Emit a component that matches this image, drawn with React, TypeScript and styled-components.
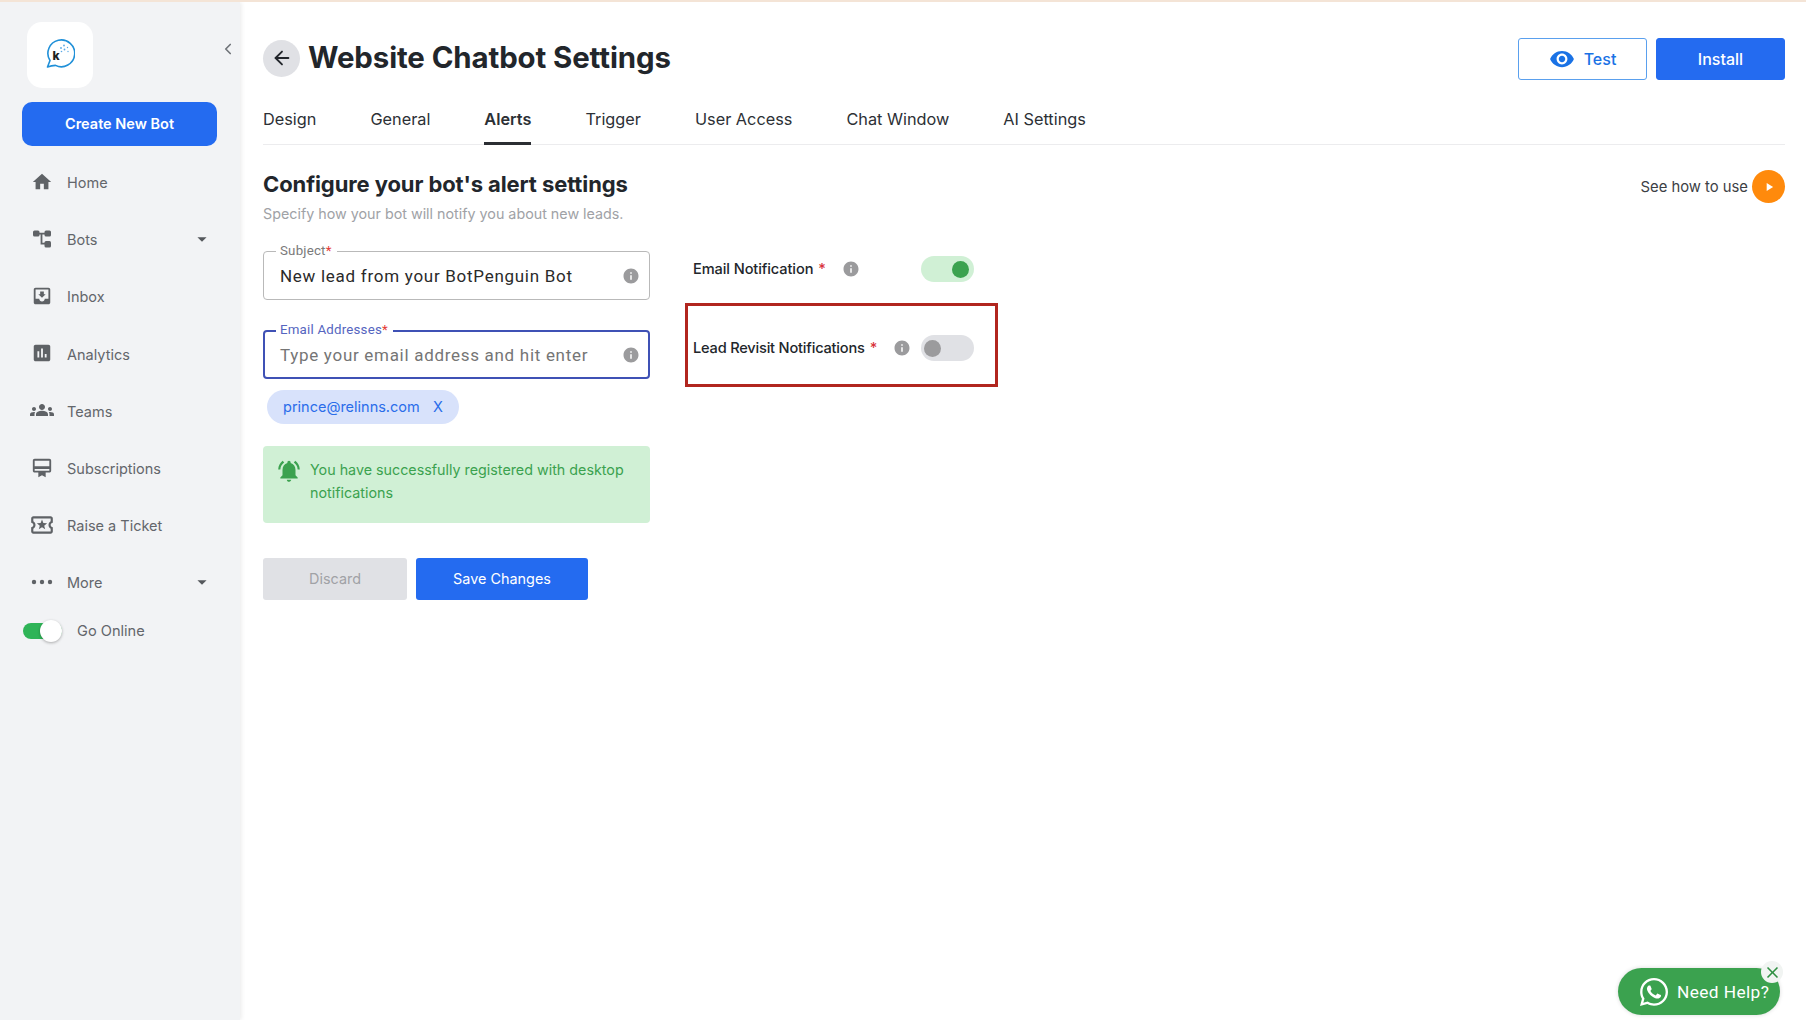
import React from "react";
import styled, { createGlobalStyle } from "styled-components";
import {
  MdHome, MdMoveToInbox, MdAssessment, MdGroups, MdCardMembership, MdOutlineLocalActivity,
  MdArrowDropDown, MdInfo, MdVisibility, MdNotificationsActive, MdPlayArrow, MdClose,
} from "react-icons/md";
import { FaWhatsapp } from "react-icons/fa";
import { ChevronLeft, ArrowLeft } from "lucide-react";

const Global = createGlobalStyle`
  html, body { margin: 0; padding: 0; background: #fff; }
  body { font-family: Inter, "Liberation Sans", sans-serif; color: #22262b; }
  * { box-sizing: border-box; }
`;

const Page = styled.div`
  width: 1806px; height: 1020px; display: flex; overflow: hidden; position: relative;
  border-top: 2px solid #f4e4d6;
`;
const Sidebar = styled.aside`
  width: 240px; flex: none; background: #f2f3f5; position: relative;
  padding: 20px 23px 0 22px; display: flex; flex-direction: column;
  box-shadow: 1px 0 5px rgba(0,0,0,.09);
`;
const LogoBox = styled.div`
  width: 66px; height: 66px; margin-left: 5px; background: #fff; border-radius: 15px;
  display: flex; align-items: center; justify-content: center; padding-right: 3px;
`;
const Collapse = styled.button`
  position: absolute; top: 38px; right: 3px; border: 0; background: none; padding: 0;
  color: #6f7378; display: flex;
`;
const CreateButton = styled.button`
  height: 44px; margin-top: 14px; border: 0; border-radius: 10px; background: #246bf0;
  color: #fff; font: 600 14.5px/40px Inter, sans-serif; padding-bottom: 2px;
`;
const NavList = styled.nav`
  display: flex; flex-direction: column; margin-top: 8px;
`;
const NavRow = styled.div`
  height: 57.2px; display: flex; align-items: center; gap: 15px; padding-left: 10px;
  color: #63666b; font-size: 14.5px; font-weight: 400;
`;
const NavIcon = styled.span`
  width: 20px; height: 20px; display: flex; align-items: center; justify-content: center; color: #5f6266;
  margin-bottom: 2px; flex: none;
  & > svg { flex: none; }
`;
const NavLabel = styled.span` flex: 1; `;
const Caret = styled.span`
  display: flex; margin-right: 4px; margin-bottom: 2px; color: #55585c;
`;
const GoOnline = styled.div`
  display: flex; align-items: center; gap: 15px; height: 24px; margin-top: 7px; color: #63666b; font-size: 14.6px;
`;
const SmallSwitch = styled.div`
  width: 39px; height: 16px; border-radius: 8px; background: #2fb457; position: relative; margin-left: 1px;
  &::after {
    content: ""; position: absolute; right: 0; top: -3px; width: 22px; height: 22px; border-radius: 50%;
    background: #fff; box-shadow: 0 1px 3px rgba(0,0,0,.3);
  }
`;
const Main = styled.main`
  flex: 1; padding: 34px 21px 0 23px; display: flex; flex-direction: column; min-width: 0;
`;
const Header = styled.header`
  display: flex; align-items: center; height: 44px;
`;
const BackButton = styled.button`
  width: 37px; height: 37px; flex: none; border: 0; border-radius: 50%; background: #e0e1e5; color: #22262b;
  display: flex; align-items: center; justify-content: center; padding: 0;
`;
const Title = styled.h1`
  margin: 0 0 0 8px; font-size: 29.4px; line-height: 44px; font-weight: 700; color: #22262b; flex: 1; letter-spacing: -.1px;
`;
const TopButton = styled.button<{ $solid?: boolean }>`
  width: 129px; height: 42px; margin: 1px 0 0 9px; border-radius: 3px; display: flex; align-items: center; justify-content: center;
  gap: 9px; font: 500 16px Inter, sans-serif; padding: 0;
  border: 1px solid ${(p) => (p.$solid ? "#246bf0" : "#5aa0ee")};
  background: ${(p) => (p.$solid ? "#246bf0" : "#fff")};
  color: ${(p) => (p.$solid ? "#fff" : "#1a72e5")};
`;
const Tabs = styled.div`
  display: flex; gap: 54px; height: 43px; margin-top: 22px; border-bottom: 1px solid #ececee;
`;
const Tab = styled.div<{ $active?: boolean }>`
  height: 43px; padding-top: 3px; line-height: 28px; font-size: 16.3px; color: #2c3035;
  font-weight: ${(p) => (p.$active ? 600 : 400)};
  border-bottom: 3px solid ${(p) => (p.$active ? "#2b2e33" : "transparent")};
`;
const SectionHead = styled.div`
  display: flex; justify-content: space-between; margin-top: 24px;
`;
const Heading = styled.h2`
  margin: 0; font-size: 22px; line-height: 30px; font-weight: 700; color: #22262b; letter-spacing: -.1px;
`;
const Sub = styled.p`
  margin: 5px 0 0; font-size: 14.3px; line-height: 20px; color: #a0a2a6;
`;
const HowTo = styled.div`
  display: flex; align-items: center; gap: 4px; font-size: 14.8px; color: #3c4045; height: 33px; margin-top: 1px;
`;
const PlayDot = styled.span`
  width: 33px; height: 33px; border-radius: 50%; background: #ff8a0c; color: #fff;
  display: flex; align-items: center; justify-content: center;
`;
const Columns = styled.div`
  display: flex; margin-top: 27px;
`;
const FormColumn = styled.div`
  width: 387px; flex: none; display: flex; flex-direction: column;
`;
const Field = styled.div<{ $focus?: boolean }>`
  position: relative; display: flex; align-items: center; justify-content: space-between; border-radius: 4px;
  padding: 0 ${(p) => (p.$focus ? "8px 0 15px" : "9px 0 16px")};
  height: 49px;
  border: ${(p) => (p.$focus ? "2px solid #3f51b5" : "1px solid #b9b9b9")};
  margin-top: ${(p) => (p.$focus ? 30 : 0)}px;
`;
const Legend = styled.label<{ $focus?: boolean }>`
  position: absolute; padding: 0 5px 0 4px; background: #fff;
  left: ${(p) => (p.$focus ? 11 : 12)}px; top: ${(p) => (p.$focus ? -9 : -8)}px;
  font: 400 13.3px/14px Roboto, sans-serif; letter-spacing: .2px;
  color: ${(p) => (p.$focus ? "#5565c0" : "#7a7a7a")};
  & > b { color: #e53935; font-weight: 400; }
`;
const FieldText = styled.span<{ $placeholder?: boolean }>`
  font: 400 17px Roboto, sans-serif; letter-spacing: ${(p) => (p.$placeholder ? ".7px" : ".72px")};
  color: ${(p) => (p.$placeholder ? "#757575" : "#2a2a2a")};
`;
const InfoWrap = styled.span`
  display: flex; color: #9b9b9d;
`;
const Chip = styled.div`
  align-self: flex-start; margin: 11px 0 0 4px; height: 34px; width: 192px; padding: 0 16px 2px; border-radius: 17px;
  background: #d8e2fb; color: #2a6dea; font-size: 14.5px; display: flex; align-items: center; justify-content: space-between;
`;
const Notice = styled.div`
  margin-top: 22px; height: 77px; border-radius: 4px; background: #d0f0d5; color: #3ba24f;
  display: flex; gap: 8px; padding: 12px 14px 0 13px; font-size: 14.3px; line-height: 23px;
`;
const BellWrap = styled.span` flex: none; display: flex; height: 26px; align-items: center; `;
const Actions = styled.div`
  display: flex; gap: 9px; margin-top: 35px;
`;
const ActionButton = styled.button<{ $primary?: boolean }>`
  height: 42px; width: ${(p) => (p.$primary ? 172 : 144)}px; border: 0; border-radius: 3px; padding: 0 0 2px;
  font: 400 14.4px Inter, sans-serif;
  background: ${(p) => (p.$primary ? "#246bf0" : "#e0e1e5")};
  color: ${(p) => (p.$primary ? "#fff" : "#a0a2a6")};
`;
const ToggleColumn = styled.div`
  margin-left: 35px; width: 313px; display: flex; flex-direction: column; padding-top: 5px;
`;
const ToggleRow = styled.div<{ $boxed?: boolean }>`
  display: flex; align-items: center; font-size: 14.6px; color: #22262b; font-weight: 500;
  ${(p) => (p.$boxed
    ? "height: 84px; margin-top: 21px; border: 3px solid #b1261f; padding: 6px 21px 0 5px; letter-spacing: -.2px;"
    : "height: 26px; padding: 0 24px 0 8px; letter-spacing: -.1px;")}
`;
const Star = styled.b` color: #d8323a; margin-left: 5px; font-weight: 500; `;
const RowInfo = styled.span`
  margin-left: 16px; display: flex; color: #9b9b9d;
`;
const Toggle = styled.div<{ $on?: boolean }>`
  width: 53px; height: 26px; border-radius: 13px; position: relative; margin-left: auto; flex: none;
  background: ${(p) => (p.$on ? "#d0f0d5" : "#e0e1e5")};
  &::after {
    content: ""; position: absolute; top: 4.5px; width: 17px; height: 17px; border-radius: 50%;
    ${(p) => (p.$on ? "right: 5px; background: #3ba24f;" : "left: 3px; background: #9b9b9d;")}
  }
`;
const Help = styled.div`
  position: absolute; left: 1618px; top: 966px; width: 162px; height: 47px; border-radius: 24px; background: #3ba24f;
  color: #fff; display: flex; align-items: center; gap: 7px; padding-left: 20px; font: 400 17.3px Roboto, sans-serif; letter-spacing: .4px;
  box-shadow: 0 0 4px rgba(0,0,0,.15);
`;
const HelpClose = styled.span`
  position: absolute; right: -3px; top: -7px; width: 22px; height: 22px; border-radius: 50%; background: #f1f4f2;
  color: #2e8f41; display: flex; align-items: center; justify-content: center;
`;

const Logo = () => (
  <svg width="32" height="32" viewBox="0 0 32 32" fill="none">
    <path d="M4.5 28 L7 21.5 A13.4 13.4 0 1 1 12.5 26.4 Q8.5 26.8 4.5 28 Z" stroke="#2090d8" strokeWidth="1.6" strokeLinejoin="round" />
    <text x="9.5" y="20.5" fontFamily="Inter, sans-serif" fontSize="12" fontWeight="800" fill="#1d1f22">k</text>
    <g fill="#5aa9e6">
      <circle cx="18" cy="9" r=".9" /><circle cx="21" cy="6.5" r=".9" /><circle cx="21.5" cy="10.5" r=".9" />
      <circle cx="24.5" cy="8.5" r=".7" /><circle cx="18.5" cy="12.5" r=".8" /><circle cx="25" cy="12.5" r=".7" />
    </g>
  </svg>
);
const BotsIcon = () => (
  <svg width="20" height="20" viewBox="0 0 20 20" fill="#5f6266">
    <rect x="1" y="1.5" width="6.5" height="6" rx="1.5" />
    <rect x="12.5" y="1.5" width="6.5" height="6" rx="1.5" />
    <rect x="12.5" y="12" width="6.5" height="6.5" rx="1.5" />
    <path d="M7 3.7h6v1.8H10.4v8.2h2.6v1.8H8.6V5.5H7z" />
  </svg>
);
const DotsIcon = () => (
  <svg width="22" height="8" viewBox="0 0 22 8" fill="#5f6266">
    <circle cx="3" cy="4" r="2.2" /><circle cx="11" cy="4" r="2.2" /><circle cx="19" cy="4" r="2.2" />
  </svg>
);

const nav = [
  { label: "Home", icon: <MdHome size={22} /> },
  { label: "Bots", icon: <BotsIcon />, caret: true },
  { label: "Inbox", icon: <MdMoveToInbox size={22} /> },
  { label: "Analytics", icon: <MdAssessment size={22} /> },
  { label: "Teams", icon: <MdGroups size={24} /> },
  { label: "Subscriptions", icon: <MdCardMembership size={22} /> },
  { label: "Raise a Ticket", icon: <MdOutlineLocalActivity size={26} /> },
  { label: "More", icon: <DotsIcon />, caret: true },
];
const tabs = ["Design", "General", "Alerts", "Trigger", "User Access", "Chat Window", "AI Settings"];

export default function App() {
  return (
    <Page>
      <Global />
      <Sidebar>
        <LogoBox><Logo /></LogoBox>
        <Collapse><ChevronLeft size={18} strokeWidth={2.2} /></Collapse>
        <CreateButton>Create New Bot</CreateButton>
        <NavList>
          {nav.map((n) => (
            <NavRow key={n.label}>
              <NavIcon>{n.icon}</NavIcon>
              <NavLabel>{n.label}</NavLabel>
              {n.caret && <Caret><MdArrowDropDown size={22} /></Caret>}
            </NavRow>
          ))}
        </NavList>
        <GoOnline><SmallSwitch />Go Online</GoOnline>
      </Sidebar>
      <Main>
        <Header>
          <BackButton><ArrowLeft size={22} strokeWidth={2} /></BackButton>
          <Title>Website Chatbot Settings</Title>
          <TopButton><MdVisibility size={26} />Test</TopButton>
          <TopButton $solid>Install</TopButton>
        </Header>
        <Tabs>
          {tabs.map((t) => <Tab key={t} $active={t === "Alerts"}>{t}</Tab>)}
        </Tabs>
        <SectionHead>
          <div>
            <Heading>Configure your bot's alert settings</Heading>
            <Sub>Specify how your bot will notify you about new leads.</Sub>
          </div>
          <HowTo>See how to use<PlayDot><MdPlayArrow size={14} /></PlayDot></HowTo>
        </SectionHead>
        <Columns>
          <FormColumn>
            <Field>
              <Legend>Subject<b>*</b></Legend>
              <FieldText>New lead from your BotPenguin Bot</FieldText>
              <InfoWrap><MdInfo size={18} /></InfoWrap>
            </Field>
            <Field $focus>
              <Legend $focus>Email Addresses<b>*</b></Legend>
              <FieldText $placeholder>Type your email address and hit enter</FieldText>
              <InfoWrap><MdInfo size={18} /></InfoWrap>
            </Field>
            <Chip><span>prince@relinns.com</span><span>X</span></Chip>
            <Notice>
              <BellWrap><MdNotificationsActive size={26} /></BellWrap>
              <span>You have successfully registered with desktop notifications</span>
            </Notice>
            <Actions>
              <ActionButton>Discard</ActionButton>
              <ActionButton $primary>Save Changes</ActionButton>
            </Actions>
          </FormColumn>
          <ToggleColumn>
            <ToggleRow>
              Email Notification<Star>*</Star>
              <RowInfo><MdInfo size={18} /></RowInfo>
              <Toggle $on />
            </ToggleRow>
            <ToggleRow $boxed>
              Lead Revisit Notifications<Star>*</Star>
              <RowInfo><MdInfo size={18} /></RowInfo>
              <Toggle />
            </ToggleRow>
          </ToggleColumn>
        </Columns>
      </Main>
      <Help>
        <FaWhatsapp size={32} />Need Help?
        <HelpClose><MdClose size={19} /></HelpClose>
      </Help>
    </Page>
  );
}
